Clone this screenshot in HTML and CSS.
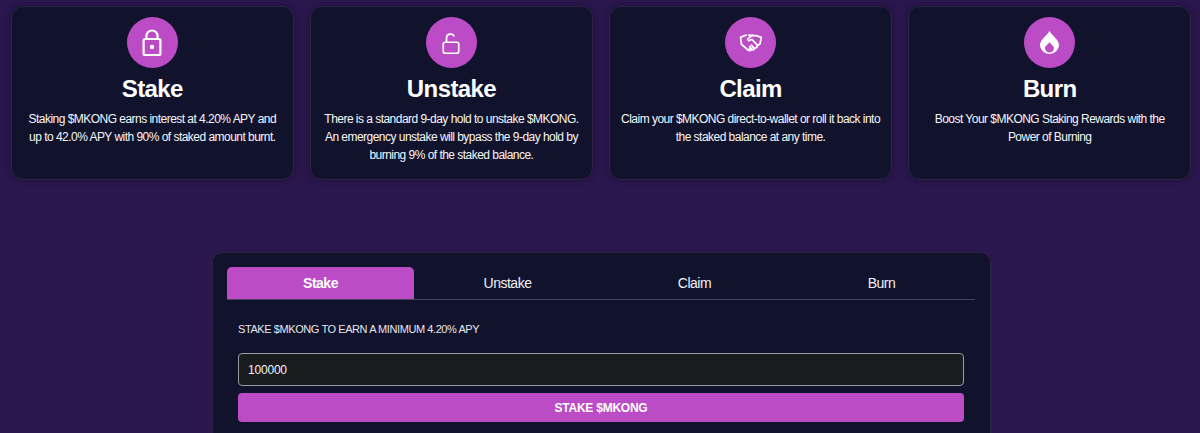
FILE: index.html
```html
<!DOCTYPE html>
<html lang="en">
  <head>
    <meta charset="UTF-8" />
    <meta name="viewport" content="width=device-width, initial-scale=1.0" />
    <title>Stake $MKONG</title>
    <link rel="stylesheet" href="styles.css">
  </head>
  <body>
    <!-- Info cards -->
    <div class="cards">
      <div class="card">
        <div class="card-icon">
          <svg width="24" height="28" viewBox="0 0 24 28" fill="none" stroke="#fff" stroke-width="2.200">
            <rect x="3.600" y="10" width="16.800" height="16" rx="1.500" />
            <path d="M6.500 10V6.500a5.500 5 0 0 1 11 0V10" />
            <circle cx="12" cy="18" r="2.200" fill="#fff" stroke="none" />
          </svg>
        </div>
        <h2>Stake</h2>
        <p>Staking $MKONG earns interest at 4.20% APY and up to 42.0% APY with 90% of staked amount burnt.</p>
      </div>
      <div class="card">
        <div class="card-icon">
          <svg width="24" height="28" viewBox="0 0 24 28" fill="none" stroke="#fff" stroke-width="1.700">
            <rect x="4.250" y="13.250" width="15.500" height="11" rx="2" />
            <path d="M7.500 13V9a4 4 0 0 1 7.700-1.500" />
          </svg>
        </div>
        <h2>Unstake</h2>
        <p>There is a standard 9-day hold to unstake $MKONG. An emergency unstake will bypass the 9-day hold by burning 9% of the staked balance.</p>
      </div>
      <div class="card">
        <div class="card-icon">
          <svg width="25" height="19" viewBox="0 0 26 22" fill="none" stroke="#fff" stroke-width="2" stroke-linejoin="round" stroke-linecap="round">
            <path d="M8 2.500 1.500 5l1 8 8 7 2 .5 2-1.500 2 .5 1.500-2 2-.5 1-2 3-2.500 1.500-7.500-6-2h-4L11 2.500" />
            <path d="M15 2.500 9.500 7l1.500 2 3.500-1.500 6.500 6.500" />
            <path d="M10.500 20 13 17M14.500 19l-2.500-3.500M17 17.500l-3-3.500" />
          </svg>
        </div>
        <h2>Claim</h2>
        <p>Claim your $MKONG direct-to-wallet or roll it back into the staked balance at any time.</p>
      </div>
      <div class="card">
        <div class="card-icon">
          <svg width="19" height="23" viewBox="0 0 19 23">
            <path fill="#fff" fill-rule="evenodd" d="M9.500 0C12 4.500 19 9 19 14a9.500 9 0 0 1-19 0C0 9 7 4.500 9.500 0ZM9.500 11C8 13.500 5 15 5 17a4.500 4.500 0 0 0 9 0C14 15 11 13.500 9.500 11Z" />
          </svg>
        </div>
        <h2>Burn</h2>
        <p>Boost Your $MKONG Staking Rewards with the Power of Burning</p>
      </div>
    </div>

    <!-- Stake panel -->
    <div class="panel">
      <div class="tabs">
        <button class="tab active">Stake</button>
        <button class="tab">Unstake</button>
        <button class="tab">Claim</button>
        <button class="tab">Burn</button>
      </div>
      <div class="panel-body">
        <p class="panel-label">STAKE $MKONG TO EARN A MINIMUM 4.20% APY</p>
        <input class="amount" type="text" value="100000" />
        <button class="submit">STAKE $MKONG</button>
      </div>
    </div>
  </body>
</html>
```

FILE: styles.css
```css
html,
body {
  height: 433px;
  overflow: hidden;
}

body {
  font-family: "Liberation Sans", Arial, sans-serif;
  margin: 0;
  padding: 6px 9px 0 11px;
  box-sizing: border-box;
  color: #fff;
  background: #2a174e;
}

.cards {
  display: grid;
  grid-template-columns: repeat(4, 1fr);
  gap: 16.5px;
}

.card {
  height: 174px;
  box-sizing: border-box;
  padding: 10px 10px 0;
  background: #11132d;
  border: 1px solid #2b2443;
  border-radius: 12px;
  text-align: center;
  box-shadow: 0 0 6px rgba(20, 10, 40, 0.5);
}

.card-icon {
  width: 51px;
  height: 51px;
  margin: 0 auto;
  border-radius: 50%;
  background: #bc4bc6;
  display: flex;
  align-items: center;
  justify-content: center;
}

.card h2 {
  margin: 6px 0 6px;
  font-size: 24px;
  line-height: 30px;
  font-weight: 700;
  letter-spacing: -0.6px;
}

.card p {
  margin: 0;
  font-size: 12px;
  line-height: 18px;
  letter-spacing: -0.53px;
  color: #f6f6f8;
}

.panel {
  width: 779px;
  height: 181px;
  box-sizing: border-box;
  margin: 72px 0 0 201px;
  padding: 14px 15px 0 14px;
  background: #11132d;
  border: 1px solid #2b2443;
  border-bottom: none;
  border-radius: 10px 10px 0 0;
}

.tabs {
  display: grid;
  grid-template-columns: repeat(4, 1fr);
  border-bottom: 1px solid #46455f;
}

.tab {
  height: 32px;
  padding: 0;
  border: none;
  border-radius: 5px 5px 0 0;
  background: none;
  color: #f0f0f4;
  font-family: inherit;
  font-size: 14px;
  letter-spacing: -0.5px;
}

.tab.active {
  background: #bc4bc6;
  color: #fff;
  font-weight: 700;
}

.panel-body {
  padding: 0 11px;
}

.panel-label {
  margin: 22px 0 17px;
  font-size: 11px;
  line-height: 14px;
  letter-spacing: -0.42px;
  color: #e6e6ec;
}

.amount {
  display: block;
  width: 100%;
  height: 33px;
  box-sizing: border-box;
  padding: 0 9px;
  border: 1px solid #9a9aa4;
  border-radius: 4px;
  background: #1b1c1f;
  color: #f2f2f2;
  font-family: inherit;
  font-size: 12px;
  letter-spacing: -0.2px;
}

.submit {
  display: block;
  width: 100%;
  height: 29px;
  margin-top: 7px;
  border: none;
  border-radius: 4px;
  background: #bc4bc6;
  color: #fff;
  font-family: inherit;
  font-size: 12px;
  font-weight: 700;
  letter-spacing: -0.25px;
}
```
